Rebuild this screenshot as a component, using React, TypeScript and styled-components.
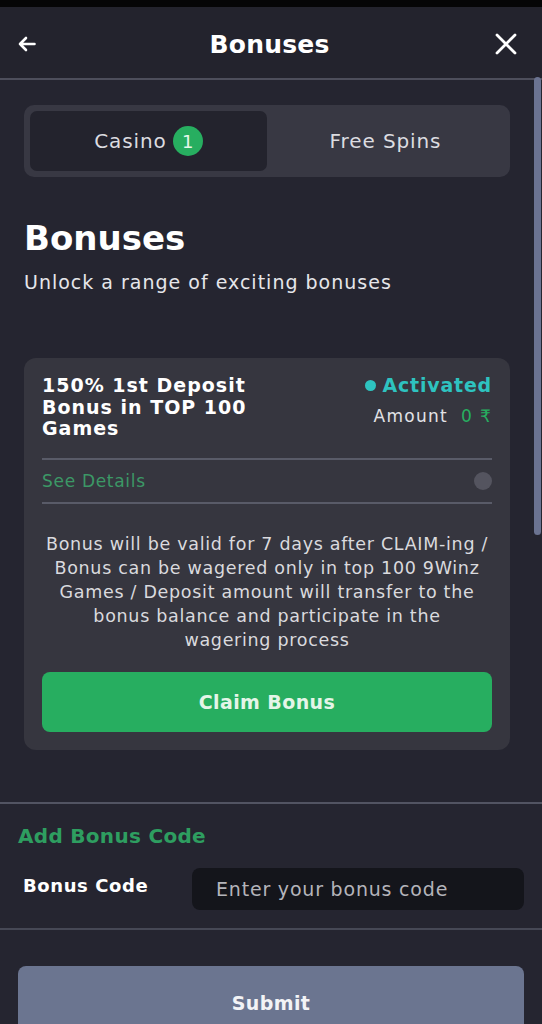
import styled, { createGlobalStyle } from "styled-components";

const GlobalStyle = createGlobalStyle`
  * {
    box-sizing: border-box;
  }
  body {
    margin: 0;
    background-color: #252530;
    font-family: "DejaVu Sans", "Noto Sans", sans-serif;
    color: #ffffff;
  }
`;

const Page = styled.div`
  position: relative;
  width: 542px;
  height: 1024px;
  overflow: hidden;
  background-color: #252530;
`;

const StatusStrip = styled.div`
  height: 7px;
  background-color: #050506;
`;

const Header = styled.header`
  height: 73px;
  display: flex;
  align-items: center;
  justify-content: space-between;
  padding: 3px 25px 0 18px;
  background-color: #23232d;
  border-bottom: 2px solid #4d4e5b;
`;

const HeaderTitle = styled.h1`
  margin: 0;
  font-size: 25px;
  font-weight: 700;
  letter-spacing: 0.2px;
  color: #ffffff;
  position: relative;
  left: 4px;
`;

const IconButton = styled.button<{ $size: number }>`
  display: flex;
  align-items: center;
  justify-content: center;
  padding: 0;
  border: 0;
  background: none;
  width: ${({ $size }) => $size}px;
`;

const Main = styled.main`
  padding: 25px 32px 0 24px;
`;

const Tabs = styled.div`
  display: grid;
  grid-template-columns: 1fr 1fr;
  height: 72px;
  padding: 6px;
  border-radius: 10px;
  background-color: #383843;
`;

const Tab = styled.div<{ $active?: boolean }>`
  display: flex;
  align-items: center;
  justify-content: center;
  gap: 6px;
  border-radius: 7px;
  font-size: 20px;
  letter-spacing: 0.9px;
  color: #dcdce0;
  background-color: ${({ $active }) => ($active ? "#23232d" : "transparent")};
`;

const Badge = styled.span`
  display: inline-flex;
  align-items: center;
  justify-content: center;
  width: 30px;
  height: 30px;
  border-radius: 50%;
  background-color: #27ae60;
  color: #e6f7ea;
  font-size: 18px;
  letter-spacing: 0;
`;

const PageTitle = styled.h2`
  margin: 41px 0 0;
  font-size: 34px;
  line-height: 40px;
  font-weight: 700;
  color: #ffffff;
`;

const Subtitle = styled.p`
  margin: 12px 0 0;
  font-size: 19px;
  line-height: 24px;
  letter-spacing: 1px;
  color: #e6e6ea;
`;

const Card = styled.section`
  margin-top: 64px;
  padding: 17px 18px 18px;
  border-radius: 12px;
  background-color: #36363f;
`;

const CardTop = styled.div`
  display: flex;
  justify-content: space-between;
  align-items: flex-start;
  padding-bottom: 18px;
  border-bottom: 2px solid #595b68;
`;

const CardTitle = styled.h3`
  margin: 0;
  width: 235px;
  font-size: 19px;
  line-height: 21.5px;
  font-weight: 700;
  letter-spacing: 1px;
  color: #ffffff;
`;

const Status = styled.div`
  display: flex;
  flex-direction: column;
  align-items: flex-end;
  gap: 9px;
`;

const Activated = styled.span`
  display: flex;
  align-items: center;
  gap: 6px;
  font-size: 19px;
  line-height: 21.5px;
  font-weight: 700;
  letter-spacing: 0.8px;
  color: #2ec3c0;

  &::before {
    content: "";
    width: 11px;
    height: 11px;
    border-radius: 50%;
    background-color: #2ec3c0;
  }
`;

const AmountRow = styled.span`
  display: flex;
  gap: 13px;
  font-size: 17px;
  line-height: 20px;
  letter-spacing: 1.3px;
  color: #e2e2e6;
`;

const Green = styled.span`
  color: #27ae60;
`;

const DetailsRow = styled.div`
  display: flex;
  align-items: center;
  justify-content: space-between;
  height: 44px;
  border-bottom: 2px solid #595b68;
  font-size: 17px;
  letter-spacing: 0.7px;
  color: #3c9866;
`;

const Toggle = styled.span`
  width: 18px;
  height: 18px;
  border-radius: 50%;
  background-color: #54545f;
`;

const Description = styled.p`
  margin: 28px 0 0;
  text-align: center;
  font-size: 17.5px;
  line-height: 24px;
  letter-spacing: 0.7px;
  color: #dadade;
`;

const PrimaryButton = styled.button<{ $tone: "green" | "slate" }>`
  display: block;
  width: 100%;
  height: ${({ $tone }) => ($tone === "green" ? "60px" : "74px")};
  border: 0;
  border-radius: 8px;
  font-family: inherit;
  font-size: 19px;
  font-weight: 700;
  letter-spacing: 0.4px;
  color: ${({ $tone }) => ($tone === "green" ? "#e4f5e8" : "#f2f3f6")};
  background-color: ${({ $tone }) => ($tone === "green" ? "#27ae60" : "#6b7590")};
`;

const ClaimWrap = styled.div`
  margin-top: 20px;
`;

const CodeSection = styled.section`
  margin-top: 52px;
  border-top: 2px solid #525462;
  border-bottom: 2px solid #464855;
  padding: 20px 18px 18px;
`;

const SectionTitle = styled.h4`
  margin: 0;
  font-size: 20px;
  line-height: 24px;
  font-weight: 700;
  letter-spacing: 0.3px;
  color: #2e9e60;
`;

const CodeRow = styled.div`
  display: flex;
  align-items: center;
  margin-top: 20px;
  padding-left: 5px;
`;

const CodeLabel = styled.label`
  width: 169px;
  padding-bottom: 7px;
  font-size: 18px;
  font-weight: 700;
  letter-spacing: 0.6px;
  color: #ffffff;
`;

const CodeInput = styled.input`
  flex: 1;
  min-width: 0;
  height: 42px;
  padding: 0 24px;
  border: 0;
  border-radius: 8px;
  background-color: #14151b;
  font-family: inherit;
  font-size: 19px;
  letter-spacing: 0.8px;
  color: #ffffff;
  outline: none;

  &::placeholder {
    color: #b4b4ba;
  }
`;

const SubmitWrap = styled.div`
  padding: 36px 18px 0;
`;

const ScrollThumb = styled.div`
  position: absolute;
  top: 77px;
  right: 1px;
  width: 7px;
  height: 458px;
  border-radius: 4px;
  background-color: #6b7391;
`;

const bonusTerms =
  "Bonus will be valid for 7 days after CLAIM-ing / Bonus can be wagered only in top 100 9Winz Games / Deposit amount will transfer to the bonus balance and participate in the wagering\u00a0process";

const App = () => {
  return (
    <>
      <GlobalStyle />
      <Page>
        <StatusStrip />
        <Header>
          <IconButton $size={18} aria-label="Back">
            <svg width="18" height="16" viewBox="0 0 18 16" fill="none">
              <path
                d="M16.5 8H2M8 2L2 8l6 6"
                stroke="#fff"
                strokeWidth="2.6"
                strokeLinecap="round"
                strokeLinejoin="round"
              />
            </svg>
          </IconButton>
          <HeaderTitle>Bonuses</HeaderTitle>
          <IconButton $size={22} aria-label="Close">
            <svg width="22" height="22" viewBox="0 0 22 22" fill="none">
              <path
                d="M2 2l18 18M20 2L2 20"
                stroke="#fff"
                strokeWidth="2.8"
                strokeLinecap="round"
              />
            </svg>
          </IconButton>
        </Header>

        <Main>
          <Tabs>
            <Tab $active>
              Casino <Badge>1</Badge>
            </Tab>
            <Tab>Free Spins</Tab>
          </Tabs>

          <PageTitle>Bonuses</PageTitle>
          <Subtitle>Unlock a range of exciting bonuses</Subtitle>

          <Card>
            <CardTop>
              <CardTitle>150% 1st Deposit Bonus in TOP 100 Games</CardTitle>
              <Status>
                <Activated>Activated</Activated>
                <AmountRow>
                  Amount <Green>0 ₹</Green>
                </AmountRow>
              </Status>
            </CardTop>
            <DetailsRow>
              See Details
              <Toggle />
            </DetailsRow>
            <Description>{bonusTerms}</Description>
            <ClaimWrap>
              <PrimaryButton $tone="green">Claim Bonus</PrimaryButton>
            </ClaimWrap>
          </Card>
        </Main>

        <CodeSection>
          <SectionTitle>Add Bonus Code</SectionTitle>
          <CodeRow>
            <CodeLabel htmlFor="bonus-code">Bonus Code</CodeLabel>
            <CodeInput id="bonus-code" placeholder="Enter your bonus code" />
          </CodeRow>
        </CodeSection>

        <SubmitWrap>
          <PrimaryButton $tone="slate">Submit</PrimaryButton>
        </SubmitWrap>

        <ScrollThumb />
      </Page>
    </>
  );
};

export default App;
